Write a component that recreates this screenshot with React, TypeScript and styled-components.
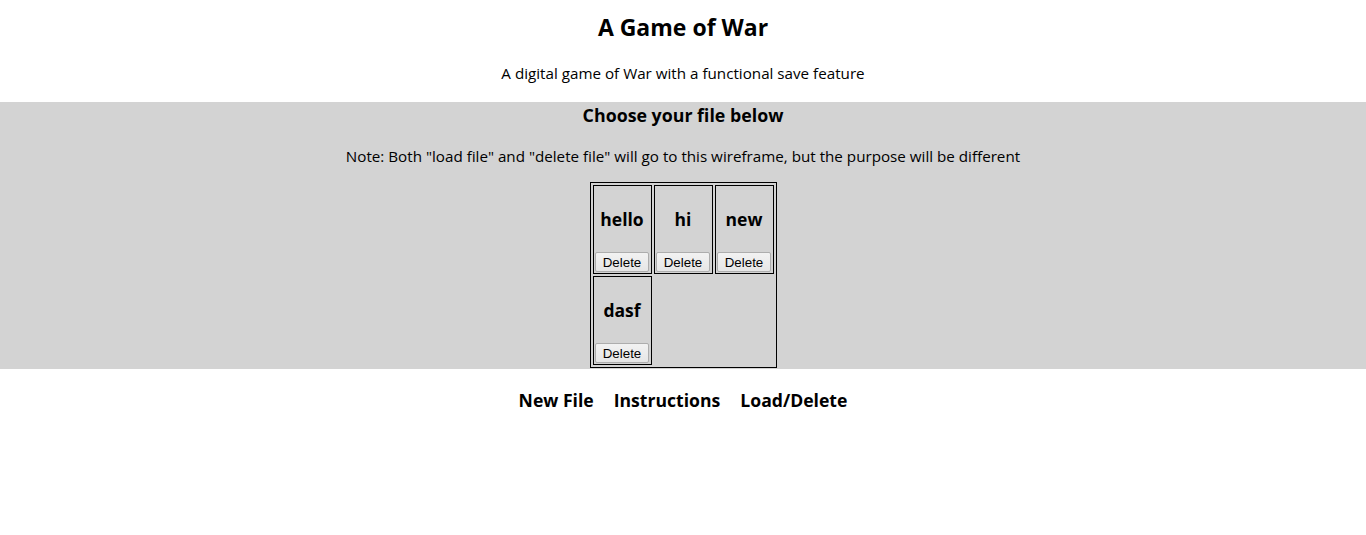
import styled, { createGlobalStyle } from 'styled-components';

const GlobalStyle = createGlobalStyle`
    body {
        margin: 0;
        background: #ffffff;
        color: #000000;
        font-family: "Open Sans", "Noto Sans", sans-serif;
    }
`;

export default function App() {
    const files = ['hello', 'hi', 'new', 'dasf'];
    return (
        <>
            <GlobalStyle />
            <Page>
                <Title>A Game of War</Title>
                <Subtitle>A digital game of War with a functional save feature</Subtitle>
                <Chooser>
                    <ChooserHeading>Choose your file below</ChooserHeading>
                    <Note>Note: Both "load file" and "delete file" will go to this wireframe, but the purpose will be different</Note>
                    <FileTable>
                        {files.map(name => (
                            <FileCell key={name}>
                                <FileName>{name}</FileName>
                                <DeleteButton>Delete</DeleteButton>
                            </FileCell>
                        ))}
                    </FileTable>
                </Chooser>
                <Nav>
                    <NavLink>New File</NavLink>
                    <NavLink>Instructions</NavLink>
                    <NavLink>Load/Delete</NavLink>
                </Nav>
            </Page>
        </>
    );
}

const Page = styled.div`
    display: flex;
    flex-direction: column;
    align-items: center;
    padding-top: 11px;
    min-height: 524px;
`;

const Title = styled.h1`
    margin: 0;
    font-size: 23px;
    line-height: 32px;
    font-weight: 700;
`;

const Subtitle = styled.p`
    margin: 19px 0 0;
    font-size: 15.2px;
    line-height: 22px;
`;

const Chooser = styled.section`
    align-self: stretch;
    margin-top: 18px;
    background: #d3d3d3;
    display: flex;
    flex-direction: column;
    align-items: center;
    padding: 1px 0 1px;
`;

const ChooserHeading = styled.h3`
    margin: 0;
    font-size: 17.8px;
    line-height: 24px;
    font-weight: 700;
`;

const Note = styled.p`
    margin: 18px 0 0;
    font-size: 15.2px;
    line-height: 22px;
`;

const FileTable = styled.div`
    margin-top: 15px;
    display: grid;
    grid-template-columns: repeat(3, 59px);
    grid-auto-rows: 89px;
    gap: 2px;
    padding: 2px;
    border: 1px solid #000;
`;

const FileCell = styled.div`
    border: 1px solid #000;
    padding: 1px;
    display: flex;
    flex-direction: column;
    align-items: center;
`;

const FileName = styled.h3`
    margin: 20px 0 auto;
    font-size: 17.5px;
    line-height: 24px;
    font-weight: 700;
`;

const DeleteButton = styled.button`
    width: 54px;
    height: 20px;
    padding: 0 4px;
    font-family: "Liberation Sans", Arial, sans-serif;
    font-size: 13.33px;
    color: #000;
    background: linear-gradient(#f2f2f2, #e6e6e6);
    border: 1px solid #adadad;
    border-radius: 2px;
`;

const Nav = styled.nav`
    margin-top: 19px;
    display: flex;
    gap: 20px;
`;

const NavLink = styled.h3`
    margin: 0;
    font-size: 17.6px;
    line-height: 24px;
    font-weight: 700;
    cursor: pointer;
`;
